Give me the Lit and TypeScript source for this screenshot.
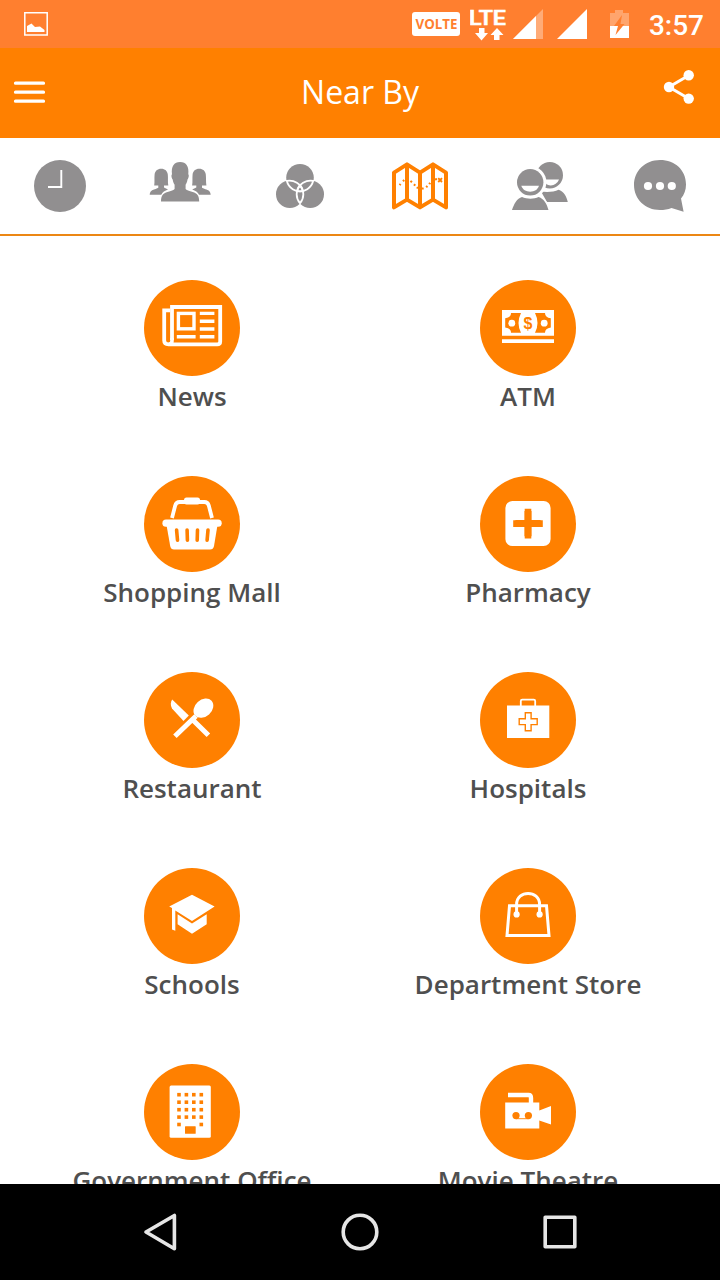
import { LitElement, html, css, svg } from "lit";
import { customElement, property } from "lit/decorators.js";

const ORANGE = "#ff8000";

const tabs = [
  // recent
  svg`<circle cx="60" cy="48" r="26"/><path d="M61.3 32V49H48" fill="none" stroke="#fff" stroke-width="1.9"/>`,
  // groups
  svg`<path d="M29.7 56.7C30 53 32 52 35 51.2L38.3 49.8V47.6H34.2C34.8 44 34.2 40 34.6 36.5C35 33 37.3 30.7 41.2 30.7S47.4 33 47.8 36.5C48.2 40 47.6 44 48.3 47.6H44V49.6L48 51.5C45 52.6 42.3 54 41.3 56.7Z"/>
  <path d="M90.7 56.7C90.4 53 88.4 52 85.4 51.2L82 49.8V47.6H86.4C85.8 44 86.2 40 85.8 36.5C85.4 33 83 30.7 79.2 30.7S73 33 72.6 36.5C72.2 40 72.8 44 72.1 47.6H76.3V49.6L72.2 51.5C75.2 52.6 78 54 79 56.7Z"/>
  <path d="M41 63.5C41 57.5 43 55.3 47.5 54C51 53.2 54 52 54.6 51V46.8C53.5 45 53 43.4 52.7 41.4C51.6 40.5 51 37 52 36.2C51 28.5 54 24 60.1 24S69.2 28.5 68.3 36.2C69.3 37 68.6 40.5 67.5 41.4C67.2 43.4 66.7 45 65.6 46.8V51C66.2 52 69.2 53.2 72.7 54C77.2 55.3 79.2 57.5 79.2 63.5Z"/>`,
  // circles
  svg`<circle cx="60" cy="39.8" r="13.8"/><circle cx="49.8" cy="56.2" r="13.8"/><circle cx="70.2" cy="56.2" r="13.8"/>
  <g fill="none" stroke="#fff" stroke-width="1.8"><path d="M46.8 42.8A13.8 13.8 0 0 1 62.8 53.2A13.8 13.8 0 0 1 46.8 42.8Z"/><path d="M73.2 42.8A13.8 13.8 0 0 0 57.2 53.2A13.8 13.8 0 0 0 73.2 42.8Z"/><path d="M60 47.2A13.8 13.8 0 0 1 60 65.2A13.8 13.8 0 0 1 60 47.2Z"/></g>`,
  // map
  svg`<g fill="none" stroke="${ORANGE}"><path d="M34 34.6L47 26.4L60 34.6L73 26.4L86 34.6V69.4L73 61.6L60 69.4L47 61.6L34 69.4ZM47 26V62M60 34V70M73 26V62" stroke-width="4" stroke-linejoin="round"/>
  <path d="M39.6 47.2L40.6 46M43 43.2L44.2 42M50.4 43L52 44.2M54 46.2L55.2 47.6M56.8 49.2L58 50.2M62 50.8L63.6 50.2M66.2 49.2L67.4 48M69.2 46.2L70.2 44.8M75 41.6L77 41" stroke-width="2.1"/><path d="M78.2 40.2L82 44M82 40.2L78.2 44" stroke-width="1.9"/></g>`,
  // friends
  svg`<circle cx="69.8" cy="37.2" r="13.2"/><path d="M65.8 41.5H79C77.5 45.3 74.5 47.4 70.8 47.4C68.5 47.4 66.5 46.5 65.4 45Z" fill="#fff"/><path d="M61 53.5C66 54.4 74 54.2 78.6 51.8C83.5 53 86.6 58.5 87.8 64H67Z"/>
  <circle cx="50.2" cy="44.3" r="16.2" fill="#fff"/><circle cx="50.2" cy="44.3" r="13.2"/><path d="M41.3 47.8H59C57.5 51.8 54.5 53.7 50.2 53.7S42.8 51.8 41.3 47.8Z" fill="#fff"/>
  <path d="M32 72C34 66 37 60 42 58.9C47 61.2 54 61.2 58.6 58.9C64 60.5 67 66 68.5 72Z" stroke="#fff" stroke-width="3" paint-order="stroke"/><path d="M30 72H72V75H30Z" fill="#fff"/>`,
  // chat
  svg`<path d="M60 22C75 22 86 32 86 46.5C86 52 84.3 56.5 81 60.5L83.6 73.8L71.5 70C68 71.5 64 72 60 72C45 72 34 61 34 47S45 22 60 22Z"/><g fill="#fff"><circle cx="48" cy="48" r="4.1"/><circle cx="60" cy="48" r="4.1"/><circle cx="71.8" cy="48" r="4.1"/></g>`,
];

const windows = [30.7, 38.2, 45.7, 53.1, 60.5].flatMap((y, row) =>
  [35, 42.4, 49.8, 57.3]
    .filter((_, col) => row < 4 || col === 0 || col === 3)
    .map((x) => svg`<rect x="${x - 1.8}" y="${y - 1.8}" width="3.6" height="3.6"/>`)
);

const places = [
  { name: "News", icon: svg`<g fill="none" stroke="#fff" stroke-width="3.8"><path d="M28 60V27H76.2V61.5Q76.2 64.3 73.2 64.3H24.5Q20.2 64.3 20.2 60.5V30.4H26"/><path d="M28 58V61Q28 64 24.8 64.3" stroke-width="3.6"/><rect x="34.4" y="33.4" width="15.6" height="15.4" stroke-width="3.4"/><path d="M55.8 33.4H70.4M55.8 41.3H70.4M55.8 49H70.4M55.8 56.8H70.4M32.8 56.8H51.6" stroke-width="3.4"/></g>` },
  { name: "ATM", icon: svg`<path d="M22 30H74V55.8H22ZM22 59.3H74V63H22Z" fill="#fff"/><path d="M31 33H41Q36 43 41 52.8H31Q31 48.5 25.2 47.5V38.3Q31 37.5 31 33ZM65 33H55Q60 43 55 52.8H65Q65 48.5 70.8 47.5V38.3Q65 37.5 65 33Z" fill="${ORANGE}"/><circle cx="31.8" cy="43.2" r="3.4" fill="#fff"/><circle cx="64.2" cy="43.2" r="3.4" fill="#fff"/><text x="48" y="48.6" class="dollar">$</text>` },
  { name: "Shopping Mall", icon: svg`<path d="M28 42L31.2 29.5Q32.2 26 35.7 26H60.3Q63.8 26 64.8 29.5L68 42" fill="none" stroke="#fff" stroke-width="3.8"/><rect x="40" y="21.6" width="16" height="7" rx="2.5" fill="#fff"/><rect x="18.4" y="43.6" width="59.3" height="7.2" rx="3.6" fill="#fff"/><path d="M22.5 49H73.5L70 70Q69.3 73.6 66 73.6H30Q26.9 73.6 26.2 70Z" fill="#fff"/><path d="M32.6 54L33.5 64.2M43.1 54L43.4 64.2M53.5 54L53.2 64.2M64 54L63.1 64.2" stroke="${ORANGE}" stroke-width="3.6" stroke-linecap="round"/>` },
  { name: "Pharmacy", icon: svg`<rect x="25.4" y="25" width="45.2" height="45" rx="7" fill="#fff"/><path d="M48 35V60.2M35.4 47.6H60.6" stroke="${ORANGE}" stroke-width="7" stroke-linejoin="round"/><path d="M48 32.8V62.4M33.2 47.6H62.8" stroke="${ORANGE}" stroke-width="6.6"/>` },
  { name: "Restaurant", icon: svg`<g fill="#fff"><path d="M28.2 27.6C26.5 30 26.2 33.5 28 36.5L39.5 48.9L44.8 43.6Z"/><path d="M49.4 48.4L64.4 63.3M52 44L30.9 64.3" stroke="#fff" stroke-width="5"/><ellipse cx="59.4" cy="36.2" rx="11" ry="8.4" transform="rotate(-42 59.4 36.2)"/></g>` },
  { name: "Hospitals", icon: svg`<path d="M27 33.4H69.3V66H27Z" fill="#fff"/><path d="M40.8 34V29Q40.8 27.6 42.3 27.6H53.7Q55.2 27.6 55.2 29V34" fill="none" stroke="#fff" stroke-width="1.8"/><path d="M45.3 40.7H51.1V46.8H57.2V52.6H51.1V58.7H45.3V52.6H39.2V46.8H45.3Z" fill="none" stroke="${ORANGE}" stroke-width="1.4"/>` },
  { name: "Schools", icon: svg`<path d="M48 26.7L70.6 38.4L48 53L31.3 42.6V62.7L28 61.5V40L25.2 38.4ZM33.6 46.2L48 55.6L62.7 46.2V56.2L48 65.8L33.6 56.2Z" fill="#fff"/>` },
  { name: "Department Store", icon: svg`<g fill="none" stroke="#fff" stroke-width="3"><path d="M29.5 37.8H66.5L69 67.6H27Z"/><path d="M36.6 45V36.5C36.6 21.7 59.6 21.7 59.6 36.5V45"/></g><circle cx="36.6" cy="46.4" r="3.1" fill="#fff"/><circle cx="59.6" cy="46.4" r="3.1" fill="#fff"/>` },
  { name: "Government Office", icon: svg`<rect x="25.6" y="21.4" width="41.2" height="52.3" rx="1.5" fill="#fff"/><g fill="${ORANGE}">${windows}<rect x="41" y="62.2" width="10.7" height="7.6" rx=".6"/></g>` },
  { name: "Movie Theatre", icon: svg`<path d="M25.2 38.4H59.3V46.5L71 42V60.4L59.3 56.6V64.4H25.2Z" fill="#fff"/><path d="M28 31H48.5Q51 31 51 34V39" fill="none" stroke="#fff" stroke-width="4.4"/><circle cx="36" cy="51.6" r="3.6" fill="${ORANGE}"/><circle cx="48.4" cy="51.6" r="3.6" fill="${ORANGE}"/><path d="M36 54.7H48.4" stroke="${ORANGE}" stroke-width=".9"/>` },
];

@customElement("place-tile")
class PlaceTile extends LitElement {
  @property() label = "";
  @property({ attribute: false }) icon: unknown;

  static styles = css`
    :host { display: flex; flex-direction: column; align-items: center; height: 196px; }
    .disc { display: block; flex: none; width: 96px; height: 96px; border-radius: 50%; background: #ff8000; }
    .label { font: 600 26px/40px "Open Sans", sans-serif; color: #4f4f4f; white-space: nowrap; }
    .dollar { font: 700 16px "Liberation Sans", sans-serif; fill: #ff8000; text-anchor: middle; }
  `;

  render() {
    return html`<svg class="disc" viewBox="0 0 96 96">${this.icon}</svg><span class="label">${this.label}</span>`;
  }
}

@customElement("app-root")
class AppRoot extends LitElement {
  static styles = css`
    :host { display: flex; flex-direction: column; width: 720px; height: 1280px; overflow: hidden; background: #fff; font-family: "Open Sans", sans-serif; }
    svg { display: block; flex: none; }
    .status { flex: none; display: flex; height: 48px; box-sizing: border-box; padding: 0 16px 0 24px; align-items: center; background: #ff7f2f; color: #fff; }
    .volte { flex: none; margin-left: 364px; border-radius: 3px; background: #fff; }
    .volte-text { font: 700 14px "Open Sans", sans-serif; fill: #ff7f2f; }
    .lte { margin-left: 10px; }
    .lte-text { font: 500 21px Roboto, sans-serif; }
    .sig1 { margin-left: 7px; }
    .sig2 { margin-left: 14px; }
    .battery { margin-left: 22px; }
    .time { margin-left: auto; font: 500 28px/50px Roboto, sans-serif; padding-top: 3px; }
    .bar { flex: none; display: grid; grid-template-columns: 120px 1fr 120px; height: 90px; background: #ff8000; color: #fff; }
    .title { font: 400 32px/88px "Open Sans", sans-serif; text-align: center; }
    .tabs { flex: none; display: flex; height: 96px; border-bottom: 2px solid #ec8714; fill: #918f90; }
    .grid { flex: 1; min-height: 0; overflow: hidden; display: grid; grid-template-columns: 336px 336px; grid-auto-rows: 196px; padding: 44px 24px 0; }
    .nav { flex: none; height: 96px; background: #000; }
  `;

  render() {
    return html`
      <div class="status">
        <svg width="24" height="24"><path d="M.8.8H23.2V23H.8Z" fill="none" stroke="#fff" stroke-width="1.5"/><path d="M3 20V14L7.5 11.5L11 15L16 14.5L20.5 18V20Z" fill="#fff"/></svg>
        <svg class="volte" width="48" height="24"><text class="volte-text" x="3.5" y="17.2" textLength="42" lengthAdjust="spacingAndGlyphs">VOLTE</text></svg>
        <svg class="lte" width="36" height="48" fill="#fff" stroke="none"><text class="lte-text" x="-1" y="25" textLength="37" lengthAdjust="spacingAndGlyphs" stroke="#fff" stroke-width=".7">LTE</text><path d="M9 28H14.5V33H18L11.5 40.5L5 33H9ZM24 40V35H20.5L27 28L33.5 35H29.5V40Z"/></svg>
        <svg class="sig1" width="30" height="30" fill="#fff"><path d="M30 0V30H0Z" opacity=".35"/><path d="M23 7V30H0Z"/></svg>
        <svg class="sig2" width="30" height="30" fill="#fff"><path d="M30 0V30H0Z"/></svg>
        <svg class="battery" width="21" height="28" fill="#fff"><path d="M1 16V3H6V0H14V3H20V16Z" opacity=".3"/><path d="M1 16H20V28H1Z"/><path d="M13 5L5 16H9L6.5 25L15.5 14H11.5Z" fill="#ff7f2f"/></svg>
        <span class="time">3:57</span>
      </div>
      <div class="bar">
        <svg width="120" height="90"><path d="M15.5 35.2H43.5M15.5 44.2H43.5M15.5 53.2H43.5" stroke="#fff" stroke-width="3.2" stroke-linecap="round"/></svg>
        <div class="title">Near By</div>
        <svg width="120" height="90" fill="#fff"><path d="M89 27.3L69 39L89 50.7" fill="none" stroke="#fff" stroke-width="3"/><circle cx="88.7" cy="27.2" r="5.2"/><circle cx="69" cy="39" r="5.2"/><circle cx="88.7" cy="50.6" r="5.2"/></svg>
      </div>
      <div class="tabs">${tabs.map((t) => html`<svg width="120" height="96" viewBox="0 0 120 96">${t}</svg>`)}</div>
      <div class="grid">${places.map((p) => html`<place-tile .label=${p.name} .icon=${p.icon}></place-tile>`)}</div>
      <svg class="nav" width="720" height="96" fill="none" stroke="#e6e6e6" stroke-width="3.6" stroke-linejoin="round"><path d="M146 48L174.4 31.5V64.8Z"/><circle cx="360" cy="48" r="16.8"/><path d="M545.2 33.2H574.8V62.8H545.2Z"/></svg>
    `;
  }
}
